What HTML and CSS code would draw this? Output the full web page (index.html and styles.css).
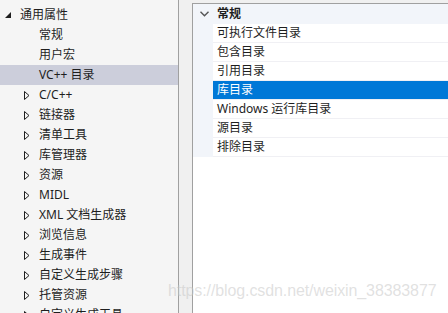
FILE: index.html
```html
<!DOCTYPE html>
<html lang="zh-CN">
<head>
<meta charset="utf-8">
<title>属性页</title>
<link rel="stylesheet" href="styles.css">
</head>
<body>
<div class="tree">
	<div class="node top"><svg class="exp" width="6" height="6" viewBox="0 0 6 6"><polygon points="6,0 6,6 0,6" fill="#1e1e1e"/></svg><span>通用属性</span></div>
	<div class="node leaf"><span>常规</span></div>
	<div class="node leaf"><span>用户宏</span></div>
	<div class="node leaf selected"><span>VC++ 目录</span></div>
	<div class="node"><svg class="col" width="6" height="9" viewBox="0 0 6 9"><polygon points="0.5,0.5 5,4.5 0.5,8.5" fill="none" stroke="#1e1e1e"/></svg><span>C/C++</span></div>
	<div class="node"><svg class="col" width="6" height="9" viewBox="0 0 6 9"><polygon points="0.5,0.5 5,4.5 0.5,8.5" fill="none" stroke="#1e1e1e"/></svg><span>链接器</span></div>
	<div class="node"><svg class="col" width="6" height="9" viewBox="0 0 6 9"><polygon points="0.5,0.5 5,4.5 0.5,8.5" fill="none" stroke="#1e1e1e"/></svg><span>清单工具</span></div>
	<div class="node"><svg class="col" width="6" height="9" viewBox="0 0 6 9"><polygon points="0.5,0.5 5,4.5 0.5,8.5" fill="none" stroke="#1e1e1e"/></svg><span>库管理器</span></div>
	<div class="node"><svg class="col" width="6" height="9" viewBox="0 0 6 9"><polygon points="0.5,0.5 5,4.5 0.5,8.5" fill="none" stroke="#1e1e1e"/></svg><span>资源</span></div>
	<div class="node"><svg class="col" width="6" height="9" viewBox="0 0 6 9"><polygon points="0.5,0.5 5,4.5 0.5,8.5" fill="none" stroke="#1e1e1e"/></svg><span>MIDL</span></div>
	<div class="node"><svg class="col" width="6" height="9" viewBox="0 0 6 9"><polygon points="0.5,0.5 5,4.5 0.5,8.5" fill="none" stroke="#1e1e1e"/></svg><span>XML 文档生成器</span></div>
	<div class="node"><svg class="col" width="6" height="9" viewBox="0 0 6 9"><polygon points="0.5,0.5 5,4.5 0.5,8.5" fill="none" stroke="#1e1e1e"/></svg><span>浏览信息</span></div>
	<div class="node"><svg class="col" width="6" height="9" viewBox="0 0 6 9"><polygon points="0.5,0.5 5,4.5 0.5,8.5" fill="none" stroke="#1e1e1e"/></svg><span>生成事件</span></div>
	<div class="node"><svg class="col" width="6" height="9" viewBox="0 0 6 9"><polygon points="0.5,0.5 5,4.5 0.5,8.5" fill="none" stroke="#1e1e1e"/></svg><span>自定义生成步骤</span></div>
	<div class="node"><svg class="col" width="6" height="9" viewBox="0 0 6 9"><polygon points="0.5,0.5 5,4.5 0.5,8.5" fill="none" stroke="#1e1e1e"/></svg><span>托管资源</span></div>
	<div class="node"><svg class="col" width="6" height="9" viewBox="0 0 6 9"><polygon points="0.5,0.5 5,4.5 0.5,8.5" fill="none" stroke="#1e1e1e"/></svg><span>自定义生成工具</span></div>
</div>
<div class="gap"></div>
<div class="grid">
	<div class="category">
		<div class="cat-head"><svg class="chev" width="9" height="6" viewBox="0 0 9 6"><polyline points="0.5,0.8 4.5,4.8 8.5,0.8" fill="none" stroke="#555" stroke-width="1.4"/></svg><b>常规</b></div>
		<div class="rows">
			<div class="row">可执行文件目录</div>
			<div class="row">包含目录</div>
			<div class="row">引用目录</div>
			<div class="row active">库目录</div>
			<div class="row">Windows 运行库目录</div>
			<div class="row">源目录</div>
			<div class="row">排除目录</div>
		</div>
	</div>
</div>
<div class="watermark">https://blog.csdn.net/weixin_38383877</div>
</body>
</html>
```

FILE: styles.css
```css
html, body {
	margin: 0;
	padding: 0;
}
body {
	width: 448px;
	height: 313px;
	overflow: hidden;
	display: flex;
	background: #f0f0f0;
	font-family: "Noto Sans", "Noto Sans CJK SC", sans-serif;
	font-size: 12px;
	color: #1e1e1e;
	position: relative;
}
.tree {
	width: 178px;
	flex: none;
	padding-top: 5px;
	background: #f5f5f5;
	border-right: 1px solid #a0a0a0;
}
.node {
	height: 20px;
	display: flex;
	align-items: center;
	padding-left: 39px;
	position: relative;
	white-space: nowrap;
}
.node span {
	line-height: 20px;
}
.node.top {
	padding-left: 20px;
}
.node.selected {
	background: #cccedb;
}
.exp {
	position: absolute;
	left: 5px;
	top: 7px;
}
.col {
	position: absolute;
	left: 24px;
	top: 6px;
}
.gap {
	width: 13px;
	flex: none;
}
.grid {
	flex: 1;
	margin-top: 3px;
	border-top: 1px solid #a0a0a0;
	border-left: 1px solid #a0a0a0;
	background: #fff;
}
.category {
	background: #f2f5fa;
}
.cat-head {
	height: 20px;
	display: flex;
	align-items: center;
	position: relative;
	padding-left: 24px;
}
.cat-head b {
	font-weight: bold;
	line-height: 20px;
}
.chev {
	position: absolute;
	left: 7px;
	top: 7px;
}
.rows {
	margin-left: 20px;
}
.row {
	height: 18px;
	line-height: 18px;
	padding-left: 4px;
	background: #fff;
	border-bottom: 1px solid #f0f0f4;
	white-space: nowrap;
}
.row.active {
	background: #0078d7;
	color: #fff;
}
.watermark {
	position: absolute;
	left: 168px;
	top: 282px;
	font-family: "Liberation Sans", sans-serif;
	font-size: 16px;
	letter-spacing: -0.1px;
	color: rgba(200, 200, 200, 0.55);
	white-space: nowrap;
}
```
